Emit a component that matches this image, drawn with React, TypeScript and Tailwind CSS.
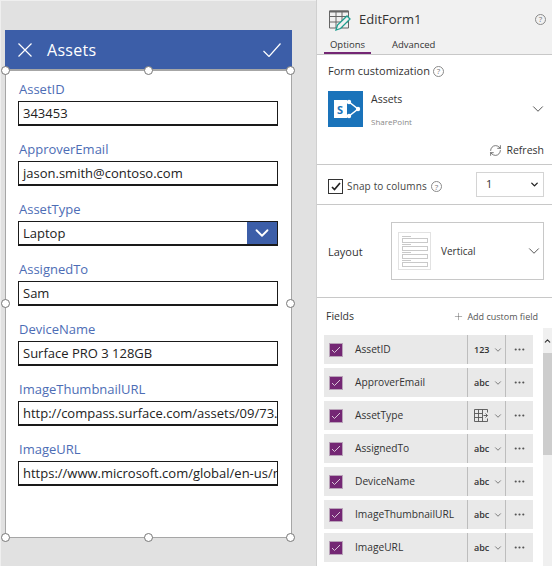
import React from 'react';
import { ChevronDown, ChevronUp, RefreshCw, Plus, MoreHorizontal } from 'lucide-react';

const formFields = [
  { label: 'AssetID', value: '343453' },
  { label: 'ApproverEmail', value: 'jason.smith@contoso.com' },
  { label: 'AssetType', value: 'Laptop', dropdown: true },
  { label: 'AssignedTo', value: 'Sam' },
  { label: 'DeviceName', value: 'Surface PRO 3 128GB' },
  { label: 'ImageThumbnailURL', value: 'http://compass.surface.com/assets/09/73.' },
  { label: 'ImageURL', value: 'https://www.microsoft.com/global/en-us/m' },
];

const fieldRows = [
  { name: 'AssetID', kind: '123' },
  { name: 'ApproverEmail', kind: 'abc' },
  { name: 'AssetType', kind: 'grid' },
  { name: 'AssignedTo', kind: 'abc' },
  { name: 'DeviceName', kind: 'abc' },
  { name: 'ImageThumbnailURL', kind: 'abc' },
  { name: 'ImageURL', kind: 'abc' },
];

const Help = () => (
  <span className="inline-flex items-center justify-center rounded-full border border-[#8a8a8a] text-[#777] leading-none w-[11px] h-[11px] text-[8px]">?</span>
);

const Handle = ({ className }: { className: string }) => (
  <span className={`absolute w-[9px] h-[9px] rounded-full bg-white border border-[#777] ${className}`} />
);

const FormPreview = () => (
  <div className="w-[316px] shrink-0 bg-[#e1e1e1] border-l border-t border-[#efefef] pt-[29px] pl-[4px]">
    {/* Title bar */}
    <div className="w-[287px] h-[39px] bg-[#3c5ea8] flex items-center pl-[13px] pr-[11px] text-white">
      <svg width="14" height="14" viewBox="0 0 14 14" className="shrink-0" fill="none" stroke="white" strokeWidth="1.2">
        <path d="M.5.5l13 13M13.5.5l-13 13" />
      </svg>
      <span className="ml-[15px] text-[16px] tracking-[0.3px]">Assets</span>
      <svg width="18" height="14" viewBox="0 0 18 14" className="ml-auto" fill="none" stroke="white" strokeWidth="1.2">
        <path d="M.5 8l5.5 5.5L17.5.5" />
      </svg>
    </div>
    {/* Form */}
    <div className="relative w-[287px] h-[469px] bg-white border border-t-2 border-[#a6a6a6] pl-[12px] pr-[12px] pt-[8px]">
      <Handle className="-left-[5px] -top-[5px]" />
      <Handle className="left-[138px] -top-[5px]" />
      <Handle className="-right-[4px] -top-[5px]" />
      <Handle className="-left-[5px] top-[228px]" />
      <Handle className="-right-[4px] top-[228px]" />
      <Handle className="-left-[5px] -bottom-[5px]" />
      <Handle className="left-[138px] -bottom-[5px]" />
      <Handle className="-right-[4px] -bottom-[5px]" />
      <div className="flex flex-col gap-[13px]">
        {formFields.map((f) => (
          <div key={f.label} className="h-[47px]">
            <div className="h-[20px] pl-px text-[13px] leading-[20px] text-[#4d6db5]">{f.label}</div>
            <div className="relative mt-[2px] h-[25px] w-[260px] border border-b-2 border-[#1a1a1a] flex items-center pl-[4px] pt-px overflow-hidden">
              <span className="text-[13px] text-[#222] whitespace-nowrap">{f.value}</span>
              {f.dropdown && (
                <span className="absolute right-0 top-0 bottom-0 w-[30px] bg-[#3c5ea8] flex items-center justify-center">
                  <ChevronDown size={22} color="white" strokeWidth={2} />
                </span>
              )}
            </div>
          </div>
        ))}
      </div>
    </div>
  </div>
);

const KindIcon = ({ kind }: { kind: string }) => {
  if (kind === 'grid') {
    return (
      <svg width="14" height="13" viewBox="0 0 14 13" fill="none" stroke="#555" strokeWidth="0.9" className="shrink-0">
        <path d="M.5.5h13M.5.5v12h13M.5 4.5h8M.5 8.5h8M4.5.5v12M8.5.5v12M13.5.5v3M13.5 9.5v3M9.5 6.5h4M11.5 4.5l2 2-2 2" />
      </svg>
    );
  }
  return <span className="w-[14px] text-[9px] font-semibold text-[#333] leading-none shrink-0">{kind}</span>;
};

const FieldRow = ({ name, kind }: { name: string; kind: string }) => (
  <div className="h-[29px] w-[209px] shrink-0 bg-[#e9e9e9] flex items-center">
    <span className="ml-[5px] w-[14px] h-[14px] bg-[#742774] border border-[#b9a3b9] flex items-center justify-center shrink-0">
      <svg width="10" height="8" viewBox="0 0 10 8" fill="none" stroke="#d9c6d9" strokeWidth="1"><path d="M1 4l2.5 2.5L9 1" /></svg>
    </span>
    <span className="ml-[12px] pt-px text-[10.2px] text-[#333] flex-1 whitespace-nowrap">{name}</span>
    <span className="w-[38px] h-full border-l border-[#bdbdbd] flex items-center pl-[6px] gap-[5px] shrink-0">
      <KindIcon kind={kind} />
      <ChevronDown size={10} color="#666" />
    </span>
    <span className="w-[28px] h-full border-l border-[#bdbdbd] flex items-center justify-center shrink-0">
      <MoreHorizontal size={13} color="#555" />
    </span>
  </div>
);

const SidePanel = () => (
  <div className="flex-1 h-[566px] bg-white border-l border-[#d0d0d0] flex flex-col overflow-hidden text-[#333]">
    {/* Control header */}
    <div className="h-[55px] shrink-0 bg-[#f1f1f1] border-b border-[#c8c8c8]">
      <div className="flex items-center h-[37px] pl-[12px] pr-[6px] pt-[3px]">
        <svg width="22" height="21" viewBox="0 0 22 21" fill="none" stroke="#666" strokeWidth="1">
          <path d="M.5 1h19v17H.5zM.5 6.5h19M.5 12h19M7 1v17M13 1v17" />
          <path d="M.5 1.5h19" strokeWidth="2" />
          <path d="M7 20l1.5-5L18 6l3 3-9.5 9.5z" stroke="#1f9e8f" strokeWidth="1.3" fill="#f1f1f1" />
        </svg>
        <span className="ml-[8px] text-[13px] text-[#333]">EditForm1</span>
        <span className="ml-auto flex -mt-[2px]"><Help /></span>
      </div>
      <div className="flex pl-[7px] text-[9.5px] text-[#333]">
        <span className="w-[47px] h-[17px] text-center leading-[16px] border-b-2 border-[#742774]">Options</span>
        <span className="ml-[21px] leading-[16px]">Advanced</span>
      </div>
    </div>
    {/* Form customization */}
    <div className="h-[110px] shrink-0 border-b border-[#c8c8c8] pl-[11px] pr-[8px] pt-[7px]">
      <div className="flex items-center gap-[3px] text-[11px] h-[18px]">Form customization <Help /></div>
      <div className="flex mt-[11px] h-[36px]">
        <svg width="36" height="36" viewBox="0 0 36 36">
          <rect width="35" height="36" fill="#1a73ba" />
          <rect x="6" y="9" width="13" height="18" fill="#fff" />
          <text x="9" y="23" fontSize="11" fontWeight="700" fill="#1a73ba" fontFamily="Open Sans">S</text>
          <path d="M19 11h2l9 7-9 7h-2" fill="none" stroke="#fff" strokeWidth="1.5" />
          <circle cx="21" cy="11" r="2.2" fill="#fff" />
          <circle cx="30" cy="18" r="2.2" fill="#fff" />
          <circle cx="21" cy="25" r="2.2" fill="#fff" />
        </svg>
        <div className="ml-[7px] flex-1">
          <div className="text-[10.5px] leading-[14px] mt-px">Assets</div>
          <div className="text-[8px] leading-[10px] mt-[11px] text-[#888]">SharePoint</div>
        </div>
        <ChevronDown size={18} color="#444" strokeWidth={1.2} className="mt-[9px] -mr-[3px]" />
      </div>
      <div className="flex items-center justify-end gap-[4px] mt-[16px] text-[10.5px]">
        <RefreshCw size={13} color="#444" strokeWidth={1.3} />
        <span>Refresh</span>
      </div>
    </div>
    {/* Snap to columns */}
    <div className="h-[40px] shrink-0 border-b border-[#c8c8c8] flex items-center pl-[11px] pr-[8px]">
      <div className="flex items-center pt-[4px]">
        <span className="w-[15px] h-[15px] border border-[#333] flex items-center justify-center shrink-0">
          <svg width="10" height="9" viewBox="0 0 10 9" fill="none" stroke="#222" strokeWidth="1.7"><path d="M1 5l2.5 2.5L9 1" /></svg>
        </span>
        <span className="ml-[4px] text-[10px] tracking-[0.15px] text-[#444]">Snap to columns</span>
        <span className="ml-[4px] flex"><Help /></span>
      </div>
      <div className="ml-auto w-[68px] h-[25px] border border-[#d4d4d4] flex items-center justify-between pl-[9px] pr-[3px] text-[11px]">
        1
        <ChevronDown size={11} color="#222" strokeWidth={3} />
      </div>
    </div>
    {/* Layout */}
    <div className="h-[93px] shrink-0 border-b border-[#c8c8c8] flex items-center pl-[11px] pr-[8px]">
      <span className="w-[63px] text-[11px] pt-[2px]">Layout</span>
      <div className="w-[153px] h-[58px] border border-[#c8c8c8] flex items-center pl-[6px]">
        <div className="w-[33px] h-[38px] border border-[#e2e2e2] flex flex-col justify-center gap-[1px] pl-[3px]">
          {[0, 1, 2, 3].map((i) => (
            <div key={i}>
              <div className="w-[9px] h-[1px] bg-[#c9c9c9]" />
              <div className="mt-[1px] w-[26px] h-[5px] border border-[#c9c9c9]" />
            </div>
          ))}
        </div>
        <span className="ml-[10px] text-[10px] flex-1">Vertical</span>
        <ChevronDown size={18} color="#444" strokeWidth={1.2} />
      </div>
    </div>
    {/* Fields */}
    <div className="flex-1 flex min-h-0">
      <div className="w-[226px] pl-[7px] overflow-hidden">
        <div className="h-[37px] flex items-center justify-between pl-[2px] pr-[7px] w-[221px]">
          <span className="text-[10.5px]">Fields</span>
          <span className="flex items-center gap-[3px] text-[#555] text-[9px]"><Plus size={11} strokeWidth={1} />Add custom field</span>
        </div>
        <div className="flex flex-col gap-[4px]">
          {fieldRows.map((r) => <FieldRow key={r.name} {...r} />)}
          <div className="h-[29px] w-[209px] shrink-0 bg-[#e9e9e9]" />
        </div>
      </div>
      {/* Scrollbar */}
      <div className="ml-auto w-[9px] mt-[30px] bg-[#f0f0f0] flex flex-col">
        <div className="h-[25px] flex items-center justify-center"><ChevronUp size={10} color="#333" strokeWidth={3} /></div>
        <div className="h-[102px] bg-[#cdcdcd]" />
      </div>
    </div>
  </div>
);

export default function App() {
  return (
    <div className="w-[552px] h-[566px] flex overflow-hidden bg-white" style={{ fontFamily: '"Open Sans", sans-serif' }}>
      <FormPreview />
      <SidePanel />
    </div>
  );
}
